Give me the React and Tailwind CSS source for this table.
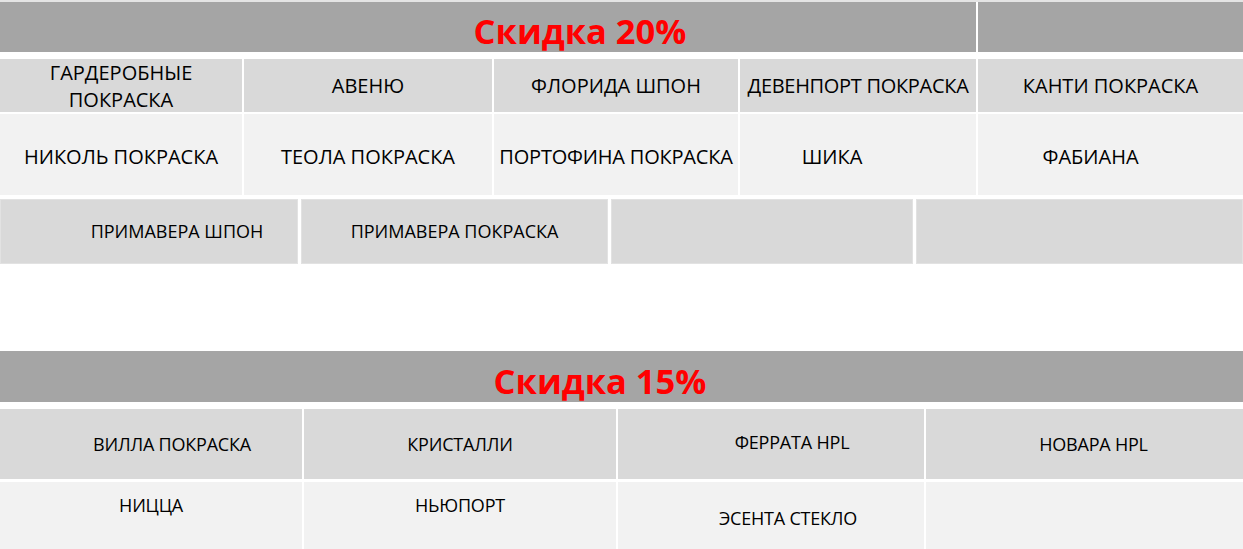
import * as React from 'react';

const font = { fontFamily: '"Open Sans", "Noto Sans", sans-serif' };

function Cell({ children, className = '' }) {
  return (
    <div className={`flex items-center justify-center text-center leading-[27px] text-black ${className}`}>
      {children}
    </div>
  );
}

export default function App() {
  return (
    <div className="w-[1243px] h-[549px] bg-white overflow-hidden" style={font}>
      <div className="h-[2px] bg-[#e4e4e4]" />

      {/* Скидка 20% */}
      <div className="grid grid-cols-[242px_248px_244px_236px_1fr] gap-x-[2px] text-[20px]">
        <div className="col-span-4 h-[50px] bg-[#a5a5a5] flex items-center justify-center pl-[184px] pt-[9px]">
          <span className="text-[34.5px] font-bold text-[#ff0000] leading-none">Скидка 20%</span>
        </div>
        <div className="h-[50px] bg-[#a5a5a5]" />

        <div className="col-span-5 h-[7px]" />

        <Cell className="h-[53px] bg-[#d9d9d9]">ГАРДЕРОБНЫЕ<br />ПОКРАСКА</Cell>
        <Cell className="h-[53px] bg-[#d9d9d9]">АВЕНЮ</Cell>
        <Cell className="h-[53px] bg-[#d9d9d9]">ФЛОРИДА ШПОН</Cell>
        <Cell className="h-[53px] bg-[#d9d9d9] whitespace-nowrap tracking-[-0.3px]">ДЕВЕНПОРТ ПОКРАСКА</Cell>
        <Cell className="h-[53px] bg-[#d9d9d9]">КАНТИ ПОКРАСКА</Cell>

        <div className="col-span-5 h-[2px]" />

        <Cell className="h-[81px] bg-[#f2f2f2] pt-[3px]">НИКОЛЬ ПОКРАСКА</Cell>
        <Cell className="h-[81px] bg-[#f2f2f2] pt-[3px]">ТЕОЛА ПОКРАСКА</Cell>
        <Cell className="h-[81px] bg-[#f2f2f2] pt-[3px] whitespace-nowrap tracking-[-0.2px]">ПОРТОФИНА ПОКРАСКА</Cell>
        <Cell className="h-[81px] bg-[#f2f2f2] pt-[3px] pr-[52px]">ШИКА</Cell>
        <Cell className="h-[81px] bg-[#f2f2f2] pt-[3px] pr-[40px]">ФАБИАНА</Cell>
      </div>

      <div className="mt-[4px] grid grid-cols-[298px_307px_302px_1fr] gap-x-[3px] text-[18px]">
        <Cell className="h-[65px] bg-[#d9d9d9] border border-[#e2e2e2] pl-[56px]">ПРИМАВЕРА ШПОН</Cell>
        <Cell className="h-[65px] bg-[#d9d9d9] border border-[#e2e2e2]">ПРИМАВЕРА ПОКРАСКА</Cell>
        <div className="h-[65px] bg-[#d9d9d9] border border-[#e2e2e2]" />
        <div className="h-[65px] bg-[#d9d9d9] border border-[#e2e2e2]" />
      </div>

      {/* Скидка 15% */}
      <div className="mt-[87px] h-[51px] bg-[#a5a5a5] flex items-center justify-center pr-[43px] pt-[10px]">
        <span className="text-[34.5px] font-bold text-[#ff0000] leading-none">Скидка 15%</span>
      </div>

      <div className="mt-[7px] grid grid-cols-[302px_312px_306px_1fr] gap-x-[2px] gap-y-[3px] text-[18px] tracking-[-0.2px]">
        <Cell className="h-[70px] bg-[#d9d9d9] pl-[42px]">ВИЛЛА ПОКРАСКА</Cell>
        <Cell className="h-[70px] bg-[#d9d9d9]">КРИСТАЛЛИ</Cell>
        <Cell className="h-[70px] bg-[#d9d9d9] pl-[42px] pb-[3px]">ФЕРРАТА HPL</Cell>
        <Cell className="h-[70px] bg-[#d9d9d9] pl-[18px]">НОВАРА HPL</Cell>

        <div className="h-[70px] bg-[#f2f2f2] flex justify-center pt-[10px] leading-[27px]">НИЦЦА</div>
        <div className="h-[70px] bg-[#f2f2f2] flex justify-center pt-[10px] leading-[27px]">НЬЮПОРТ</div>
        <div className="h-[70px] bg-[#f2f2f2] flex justify-center pl-[34px] pt-[23px] leading-[27px]">ЭСЕНТА СТЕКЛО</div>
        <div className="h-[70px] bg-[#f2f2f2]" />
      </div>
    </div>
  );
}
